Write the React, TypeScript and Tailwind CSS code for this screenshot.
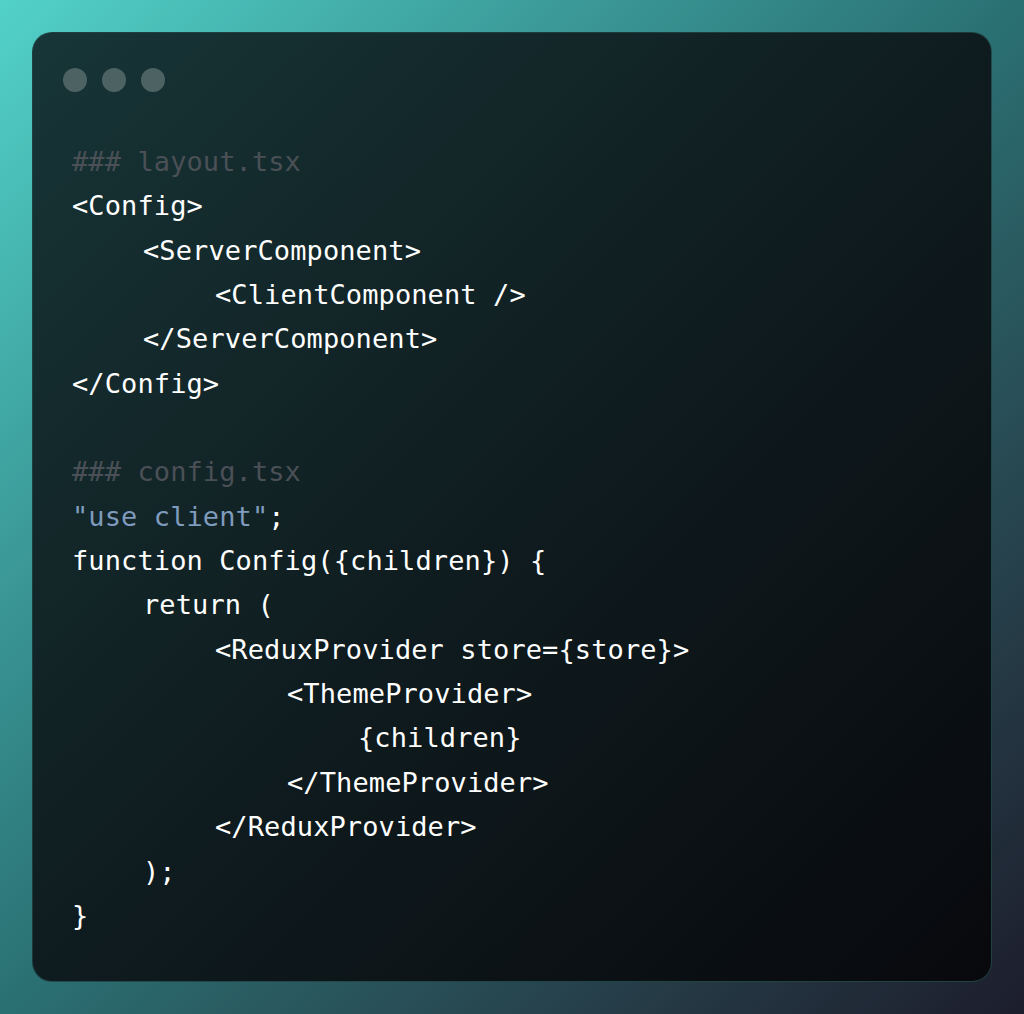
const lines: { text: string; indent: number; tone?: "comment" | "string" }[] = [
  { text: "### layout.tsx", indent: 0, tone: "comment" },
  { text: "<Config>", indent: 0 },
  { text: "<ServerComponent>", indent: 1 },
  { text: "<ClientComponent />", indent: 2 },
  { text: "</ServerComponent>", indent: 1 },
  { text: "</Config>", indent: 0 },
  { text: "", indent: 0 },
  { text: "### config.tsx", indent: 0, tone: "comment" },
  { text: '"use client";', indent: 0, tone: "string" },
  { text: "function Config({children}) {", indent: 0 },
  { text: "return (", indent: 1 },
  { text: "<ReduxProvider store={store}>", indent: 2 },
  { text: "<ThemeProvider>", indent: 3 },
  { text: "{children}", indent: 4 },
  { text: "</ThemeProvider>", indent: 3 },
  { text: "</ReduxProvider>", indent: 2 },
  { text: ");", indent: 1 },
  { text: "}", indent: 0 },
]

const indents = ["pl-0", "pl-[71px]", "pl-[143px]", "pl-[215px]", "pl-[286px]"]

function Line({ text, indent, tone }: (typeof lines)[number]) {
  if (tone === "string") {
    return (
      <div className={indents[indent]}>
        <span className="text-[#7f9bbd]">"use client"</span>
        <span className="text-white">;</span>
      </div>
    )
  }
  return (
    <div className={`${indents[indent]} ${tone === "comment" ? "text-[#4a5056]" : "text-white"}`}>
      {text || "\u00a0"}
    </div>
  )
}

export default function App() {
  return (
    <div className="w-[1024px] h-[1014px] p-[32px] bg-gradient-to-br from-[#52d2c9] via-[#2a7073] to-[#1c1d2c]">
      <div className="h-full rounded-[20px] border border-[#2c5a5a]/60 bg-gradient-to-br from-[#173537] via-[#0f1c1f] to-[#08090d] pt-[35px] px-[39px] pb-[45px]">
        <div className="flex gap-[15px] -ml-[9px]">
          <span className="w-6 h-6 rounded-full bg-[#4d6363]" />
          <span className="w-6 h-6 rounded-full bg-[#4d6363]" />
          <span className="w-6 h-6 rounded-full bg-[#4d6363]" />
        </div>

        <div className="mt-[48px] text-[27px] leading-[44.35px] whitespace-pre font-['DejaVu_Sans_Mono',monospace] tracking-[0.1px]">
          {lines.map((l, i) => (
            <Line key={i} {...l} />
          ))}
        </div>
      </div>
    </div>
  )
}
